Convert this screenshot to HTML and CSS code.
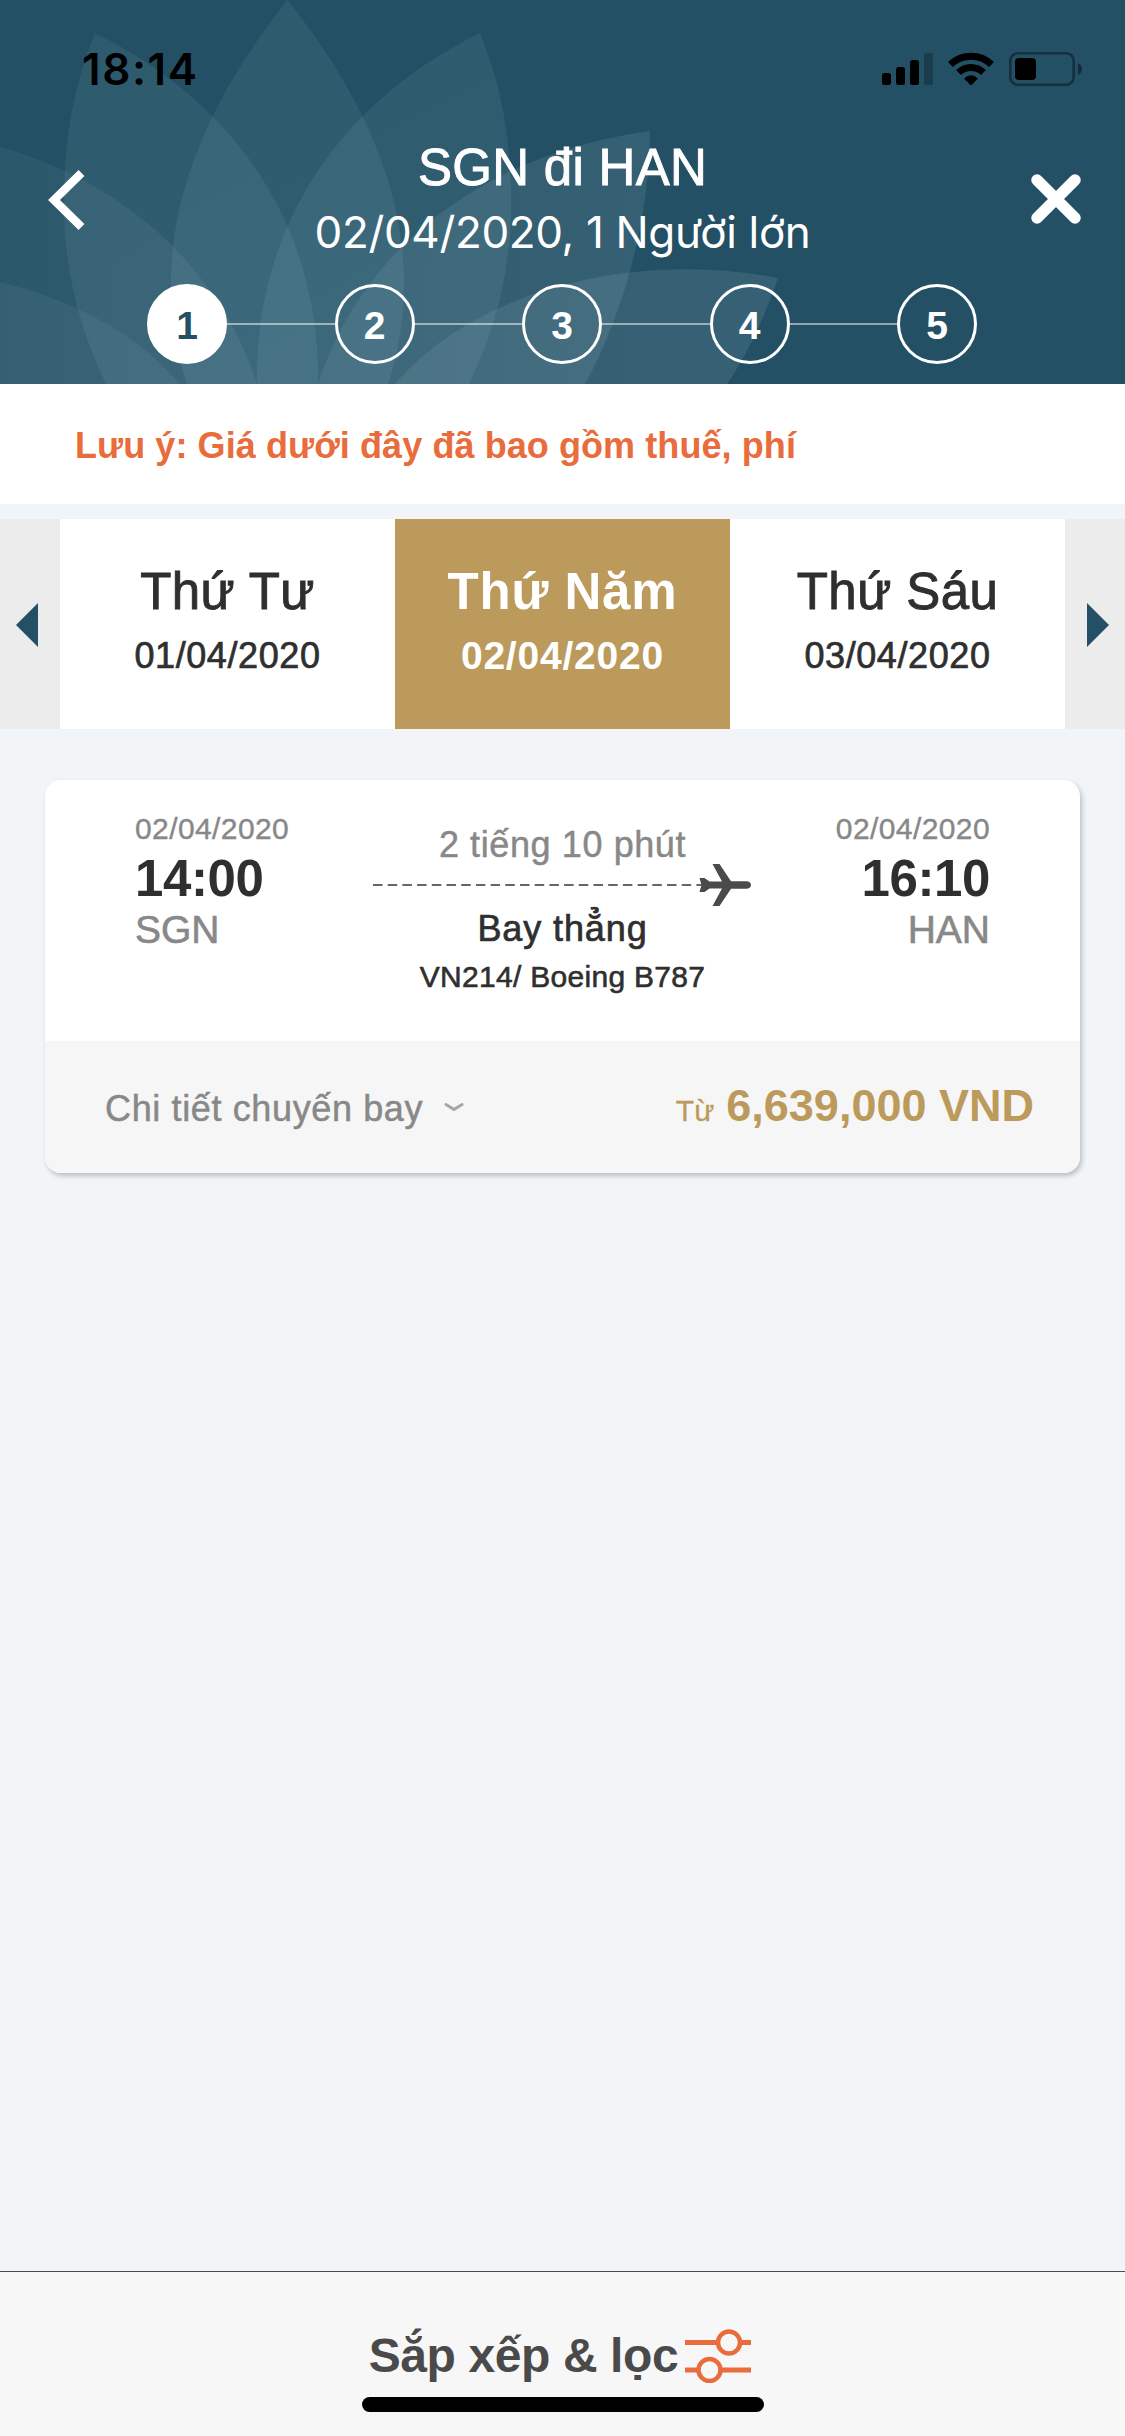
FILE: index.html
```html
<!DOCTYPE html>
<html lang="vi">
<head>
<meta charset="utf-8">
<title>SGN đi HAN</title>
<link rel="stylesheet" href="styles.css">
</head>
<body>
<div class="screen">
  <header class="header">
    <svg class="lotus" viewBox="0 0 1125 384" aria-hidden="true">
      <defs>
        <linearGradient id="petal" gradientUnits="userSpaceOnUse" x1="0" y1="0" x2="200" y2="384">
          <stop offset="0" stop-color="#b4dcea" stop-opacity=".07"/>
          <stop offset="1" stop-color="#b4dcea" stop-opacity=".09"/>
        </linearGradient>
        <linearGradient id="petal-right" gradientUnits="userSpaceOnUse" x1="-200" y1="0" x2="700" y2="0">
          <stop offset="0" stop-color="#c4dce6" stop-opacity=".04"/>
          <stop offset="1" stop-color="#c4dce6" stop-opacity=".12"/>
        </linearGradient>
      </defs>
      <g fill="url(#petal)">
        <path d="M287.500 0C200 110 171 205 171 283C171 320 177 355 187 384H388C398 355 404 320 404 283C404 205 375 110 287.500 0Z"/>
        <path d="M95 33C70 95 64 150 64 205C64 270 80 330 106 384H318C320 230 240 105 95 33Z"/>
        <path d="M480 33C505 95 511 150 511 205C511 270 495 330 469 384H257C255 230 335 105 480 33Z"/>
      </g>
      <g fill="url(#petal-right)">
        <path d="M-75 131C-74 220 -50 310 -10 384H257C215 255 100 155 -75 131Z"/>
        <path d="M650 131C649 220 625 310 585 384H318C360 255 475 155 650 131Z"/>
        <path d="M-203 278C-190 315 -175 350 -152 384H180C100 290 -60 250 -203 278Z"/>
        <path d="M778 278C765 315 750 350 727 384H395C475 290 635 250 778 278Z"/>
      </g>
    </svg>

    <div class="status">
      <span class="clock">18:14</span>
      <svg class="status-icons" width="201" height="36" viewBox="881 51 201 36" aria-hidden="true">
        <rect x="882" y="73" width="9" height="12" rx="2.500"/>
        <rect x="896" y="67" width="9" height="18" rx="2.500"/>
        <rect x="910" y="60" width="9" height="25" rx="2.500"/>
        <rect x="924" y="53" width="9" height="32" rx="2.500" opacity=".25"/>
        <g fill="none" stroke="#000" stroke-width="7">
          <path d="M950.500 64.500A29.500 29.500 0 0 1 991.500 64.500"/>
          <path d="M958.500 72.500A18 18 0 0 1 983.500 72.500"/>
        </g>
        <path d="M964 78.500Q971 72 978 78.500L971 85.500Z"/>
        <rect x="1010.300" y="53.300" width="63.400" height="31.400" rx="7.500" fill="none" stroke="#000" stroke-opacity=".4" stroke-width="2.600"/>
        <rect x="1015" y="58" width="21" height="22" rx="4"/>
        <path d="M1078 63Q1082 65 1082 69T1078 75Z" opacity=".45"/>
      </svg>
    </div>

    <div class="nav">
      <svg class="back" width="38" height="62" viewBox="0 0 38 62" aria-label="Quay lại"><path d="M33.500 4L6 31L33.500 58" fill="none" stroke="#fff" stroke-width="8.300"/></svg>
      <div class="titles">
        <h1 class="route">SGN đi HAN</h1>
        <p class="summary">02/04/2020, 1 Người lớn</p>
      </div>
      <svg class="close" width="50" height="50" viewBox="0 0 50 50" aria-label="Đóng"><path d="M6 6L44 44M44 6L6 44" stroke="#fff" stroke-width="11.500" stroke-linecap="round"/></svg>
    </div>

    <ol class="steps">
      <li class="step step-on">1</li>
      <li class="step">2</li>
      <li class="step">3</li>
      <li class="step">4</li>
      <li class="step">5</li>
    </ol>
  </header>

  <p class="note">Lưu ý: Giá dưới đây đã bao gồm thuế, phí</p>

  <nav class="days">
    <button class="arrow"><svg width="22" height="44" viewBox="0 0 22 44"><path d="M22 0V44L0 22Z"/></svg></button>
    <div class="day"><span class="day-name">Thứ Tư</span><span class="day-date">01/04/2020</span></div>
    <div class="day day-on"><span class="day-name">Thứ Năm</span><span class="day-date">02/04/2020</span></div>
    <div class="day"><span class="day-name">Thứ Sáu</span><span class="day-date">03/04/2020</span></div>
    <button class="arrow"><svg width="22" height="44" viewBox="0 0 22 44"><path d="M0 0V44L22 22Z"/></svg></button>
  </nav>

  <main class="results">
    <article class="flight">
      <div class="flight-body">
        <div class="end">
          <span class="end-date">02/04/2020</span>
          <span class="end-time">14:00</span>
          <span class="end-code">SGN</span>
        </div>
        <div class="path">
          <span class="duration">2 tiếng 10 phút</span>
          <svg class="plane" width="379" height="42" viewBox="0 0 379 42" aria-hidden="true">
            <path d="M0 21H330" stroke="#666" stroke-width="2" stroke-dasharray="9.500 5.200"/>
            <path fill="#4a4a4a" d="M326.500 14H331.500L336.500 17.500H349L339.500 0H346.500L358 17.200H374Q378 18 378 21T374 24.800H358L346.500 42H339.500L349 24.500H336.500L331.500 28H326.500L328.500 21Z"/>
          </svg>
          <span class="stops">Bay thẳng</span>
          <span class="craft">VN214/ Boeing B787</span>
        </div>
        <div class="end end-to">
          <span class="end-date">02/04/2020</span>
          <span class="end-time">16:10</span>
          <span class="end-code">HAN</span>
        </div>
      </div>
      <div class="flight-foot">
        <span class="details">Chi tiết chuyến bay</span>
        <svg class="chevron" width="20" height="10" viewBox="0 0 20 10"><path d="M2 2.500L10 7.500L18 2.500" fill="none" stroke="#aaa4a8" stroke-width="3" stroke-linecap="round" stroke-linejoin="round"/></svg>
        <span class="from">Từ</span>
        <strong class="price">6,639,000 VND</strong>
      </div>
    </article>
  </main>

  <footer class="toolbar">
    <div class="sort">
      <span class="sort-label">Sắp xếp &amp; lọc</span>
      <svg width="66" height="54" viewBox="0 0 66 54" fill="none" stroke="#e86c3c" aria-hidden="true">
        <path d="M0 13.500H32M56 13.500H66M0 41H12M37 41H66" stroke-width="5"/>
        <circle cx="44" cy="13.500" r="11" stroke-width="4.500"/>
        <circle cx="24.500" cy="41" r="11" stroke-width="4.500"/>
      </svg>
    </div>
    <div class="home"></div>
  </footer>
</div>
</body>
</html>
```
FILE: styles.css
```css
* { box-sizing: border-box; }

body {
  margin: 0;
  background: #f1f5f8;
  color: #2f2f2f;
  font-family: "Liberation Sans", Arial, sans-serif;
}

h1, p, ol { margin: 0; padding: 0; font-weight: 400; }

svg { display: block; flex: none; }

.screen {
  display: flex;
  flex-direction: column;
  width: 1125px;
  height: 2436px;
}

/* Header */
.header {
  position: relative;
  height: 384px;
  background: #235064;
  color: #fff;
}
.lotus { position: absolute; inset: 0; width: 1125px; height: 384px; }
.status, .nav, .steps { position: relative; }

.status {
  display: flex;
  align-items: center;
  justify-content: space-between;
  height: 137px;
  padding: 0 43px 0 82px;
  color: #000;
}
.clock { font: 600 44px/60px Inter, sans-serif; letter-spacing: 1.6px; }

.nav {
  display: grid;
  grid-template-columns: 1fr auto 1fr;
  align-items: center;
  height: 127px;
  padding: 0 44px;
}
.titles { text-align: center; }
.route { font-size: 51px; line-height: 62px; letter-spacing: .3px; -webkit-text-stroke: .9px; }
.summary { font: 400 44px/67px Inter, sans-serif; letter-spacing: -.35px; }
.close { margin-top: -6px; justify-self: end; }
.back { margin: -3px 0 0 4px; }

.steps {
  display: flex;
  justify-content: space-between;
  width: 830px;
  margin: 20px 0 0 147px;
  list-style: none;
}
.step {
  position: relative;
  width: 80px;
  height: 80px;
  border: 3px solid #fff;
  border-radius: 50%;
  font-size: 39px;
  font-weight: 700;
  line-height: 77px;
  text-align: center;
}
.step-on { background: #fff; color: #235064; }
.step:not(:last-child)::after {
  content: "";
  position: absolute;
  top: 36px;
  left: 77px;
  width: 107.500px;
  height: 2px;
  background: rgba(255, 255, 255, .5);
}

/* Price note */
.note {
  height: 120px;
  padding-left: 75px;
  background: #fff;
  color: #e86c3c;
  font-size: 36px;
  font-weight: 700;
  line-height: 124px;
  letter-spacing: .08px;
}

/* Day picker */
.days { display: flex; height: 210px; margin-top: 15px; }
.arrow {
  display: flex;
  align-items: center;
  justify-content: center;
  width: 60px;
  padding: 2px 0 0;
  border: 0;
  background: #ececec;
  fill: #235064;
}
.arrow:first-child { padding-right: 6px; }
.arrow:last-child { padding-left: 5px; }
.day {
  display: flex;
  flex: 1;
  flex-direction: column;
  align-items: center;
  padding-top: 43px;
  background: #fff;
}
.day-name { font-size: 51px; line-height: 60px; letter-spacing: .4px; -webkit-text-stroke: .9px; }
.day-date { font-size: 36px; line-height: 68px; letter-spacing: .6px; -webkit-text-stroke: .7px; }
.day-on { background: #bc9a5c; color: #fff; font-weight: 700; }
.day-on .day-name { letter-spacing: .9px; -webkit-text-stroke: 0; }
.day-on .day-date { font-size: 39px; letter-spacing: .8px; -webkit-text-stroke: 0; }

/* Flight card */
.results { flex: 1; padding: 51px 45px 0; }
.flight {
  height: 393px;
  border-radius: 16px;
  overflow: hidden;
  background: #fff;
  box-shadow: 2px 3px 5px rgba(0, 0, 0, .22);
}
.flight-body {
  display: flex;
  justify-content: space-between;
  height: 261px;
  padding: 0 90px;
}
.end { display: flex; flex-direction: column; width: 170px; padding-top: 32px; }
.end-to { align-items: flex-end; }
.end-date { color: #888; font-size: 30px; line-height: 34px; letter-spacing: .4px; -webkit-text-stroke: .4px; }
.end-time { font-size: 51px; font-weight: 700; line-height: 65px; letter-spacing: -.4px; }
.end-code { color: #888; font-size: 39px; line-height: 38px; -webkit-text-stroke: .6px; }
.path { display: flex; flex-direction: column; align-items: center; padding-top: 45px; }
.duration { color: #888; font-size: 36px; line-height: 39px; letter-spacing: .6px; -webkit-text-stroke: .5px; }
.stops { font-size: 36px; line-height: 46px; letter-spacing: .9px; -webkit-text-stroke: .7px; }
.craft { font-size: 30px; line-height: 50px; letter-spacing: .3px; -webkit-text-stroke: .6px; }

.flight-foot {
  display: flex;
  align-items: baseline;
  height: 132px;
  padding: 0 46px 0 60px;
  background: #f6f6f6;
  line-height: 130px;
}
.details { color: #888; font-size: 36px; letter-spacing: .63px; -webkit-text-stroke: .5px; }
.chevron { margin-left: 21px; align-self: center; }
.from { margin-left: auto; color: #bc9a5c; font-size: 30px; -webkit-text-stroke: .3px; }
.price { margin-left: 12px; color: #bc9a5c; font-size: 45px; }

/* Bottom toolbar */
.toolbar {
  height: 165px;
  padding-top: 54px;
  border-top: 1px solid #4a4f57;
  background: #f7f7f7;
}
.sort { display: flex; align-items: center; justify-content: center; gap: 7px; height: 60px; padding-right: 5px; }
.sort-label { color: #4a4a4a; font-size: 48px; font-weight: 700; line-height: 60px; letter-spacing: -.4px; }
.home { width: 402px; height: 15px; margin: 11px auto 0; border-radius: 8px; background: #000; }
```
